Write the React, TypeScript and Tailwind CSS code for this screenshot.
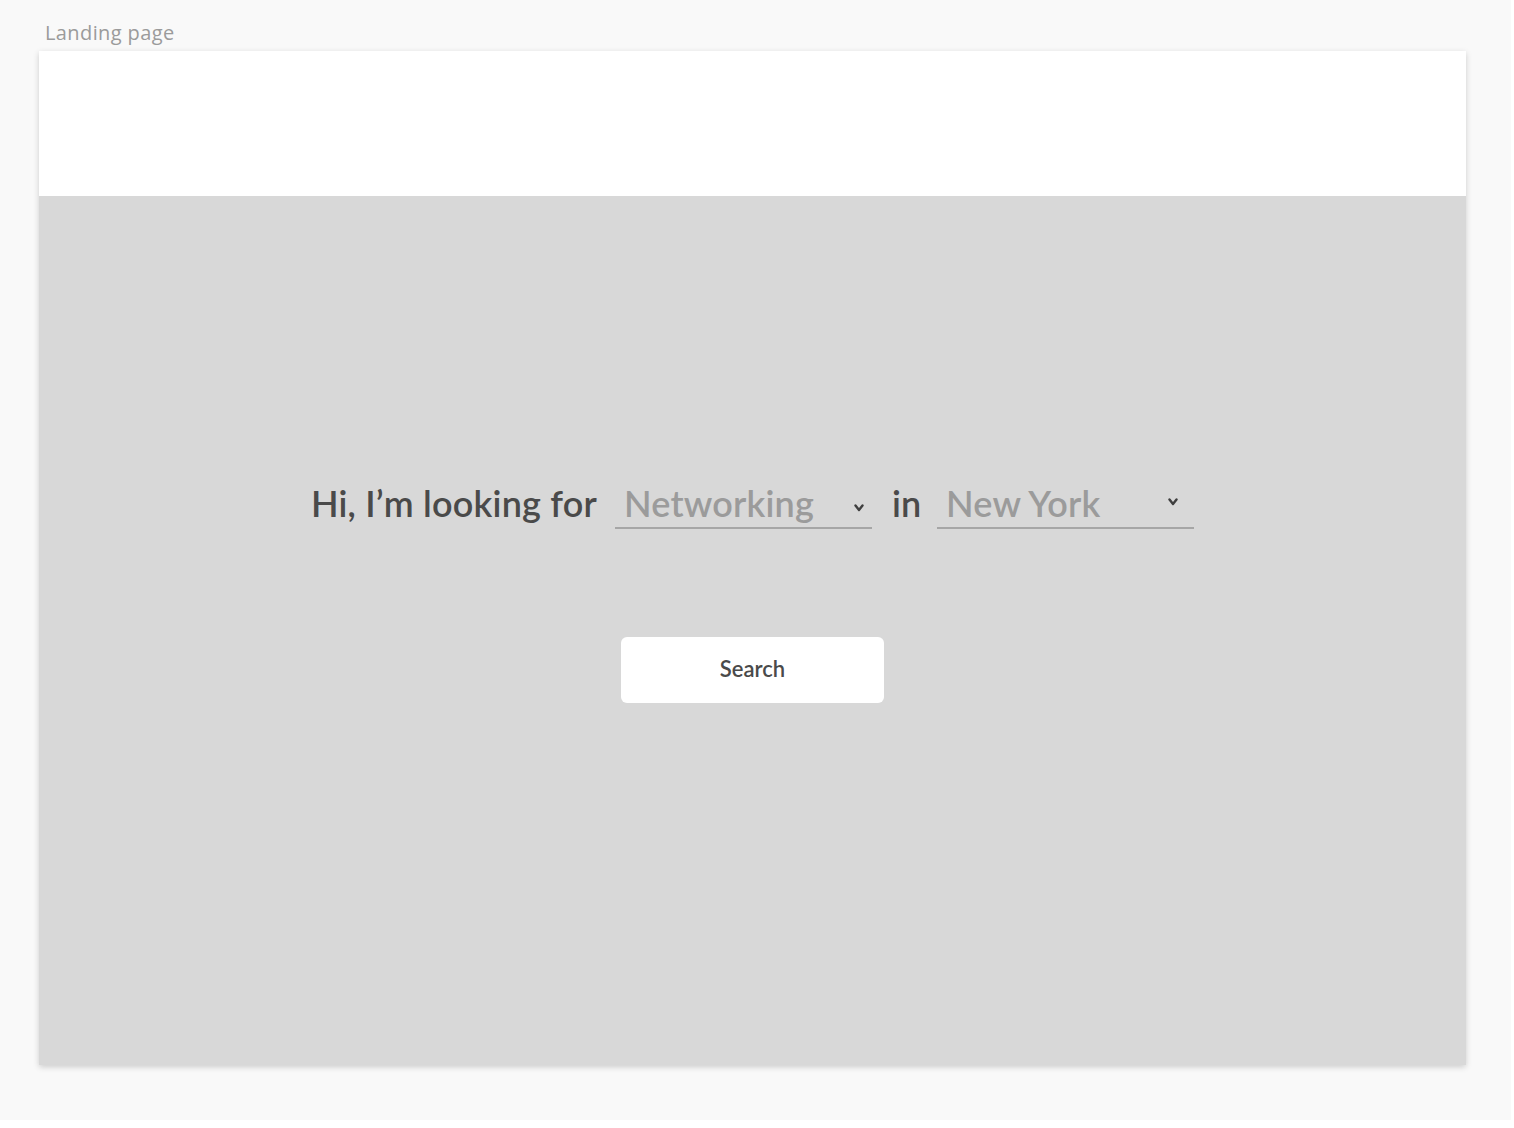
const Chevron = ({ className }: { className: string }) => (
  <svg className={className} width="10" height="8" viewBox="0 0 10 8" fill="none">
    <polyline points="1.5,1.5 5,6 8.5,1.5" stroke="#3f3f3f" strokeWidth="2.4" strokeLinecap="round" strokeLinejoin="round" />
  </svg>
);

const Dropdown = ({ value, chevronClass }: { value: string; chevronClass: string }) => (
  <div className="relative w-[257px] h-[50px] border-b-2 border-[#a6a6a6] flex items-center pl-[9px]">
    <span className="text-[36px] leading-[48px] text-[#9b9b9b] font-semibold tracking-[0.2px]">{value}</span>
    <Chevron className={chevronClass} />
  </div>
);

const App = () => {
  return (
    <div className="w-[1514px] h-[1128px] bg-white" style={{ fontFamily: 'Lato, "Open Sans", sans-serif' }}>
      <div className="w-[1511px] h-[1120px] bg-[#f9f9f9] pt-[21px]">
        {/* Frame label */}
        <div
          className="pl-[45px] h-[24px] mb-[6px] text-[20px] leading-[24px] tracking-[0.4px] text-[#9b9b9b]"
          style={{ fontFamily: '"Open Sans", sans-serif' }}
        >
          Landing page
        </div>

        {/* Frame */}
        <div className="ml-[39px] w-[1427px] shadow-[0_2px_6px_rgba(0,0,0,0.18)]">
          <div className="h-[145px] bg-white" />
          <div className="h-[869px] bg-[#d8d8d8] pt-[283px] flex flex-col items-center">
            <div className="flex items-end">
              <span className="text-[36px] leading-[48px] h-[50px] text-[#4a4a4a] font-semibold tracking-[0.2px]">Hi, I’m looking for</span>
              <div className="ml-[18px]">
                <Dropdown value="Networking" chevronClass="absolute right-[8px] top-[25px]" />
              </div>
              <span className="ml-[20px] mr-[16px] text-[36px] leading-[48px] h-[50px] text-[#4a4a4a] font-semibold">in</span>
              <Dropdown value="New York" chevronClass="absolute right-[16px] top-[19px]" />
            </div>

            <button className="mt-[108px] w-[263px] h-[66px] pb-[4px] bg-white rounded-[6px] text-[22px] font-semibold text-[#4a4a4a]">
              Search
            </button>
          </div>
        </div>
      </div>
    </div>
  );
};

export default App;
